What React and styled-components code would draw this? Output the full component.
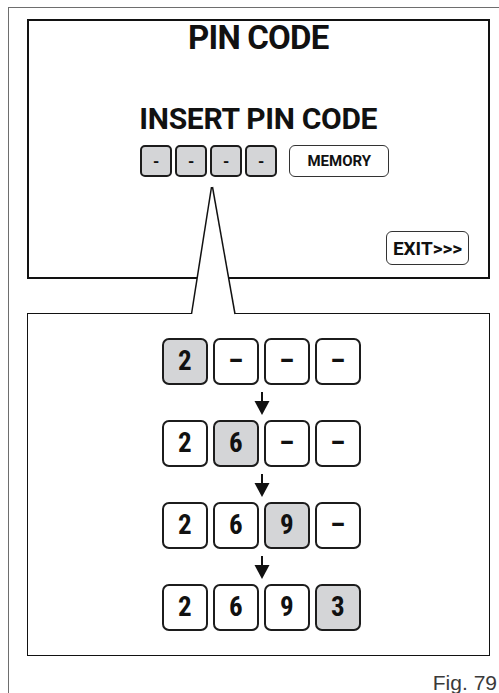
import React from 'react';
import styled, { createGlobalStyle } from 'styled-components';

const GlobalStyle = createGlobalStyle`
    html, body {
        margin: 0;
        padding: 0;
        background: #ffffff;
    }
    body {
        font-family: Roboto, "Liberation Sans", sans-serif;
        color: #111111;
    }
    * {
        box-sizing: border-box;
    }
`;

const Page = styled.div`
    position: relative;
    width: 499px;
    height: 693px;
    padding: 7px 0 0 8px;
    overflow: hidden;
`;

const Frame = styled.div`
    height: 100%;
    border-top: 1.5px solid #6e6e6e;
    border-left: 1.5px solid #6e6e6e;
    padding: 10.5px 9px 0 17.5px;
    display: flex;
    flex-direction: column;
`;

const Screen = styled.section`
    height: 261px;
    border: 2px solid #121212;
    display: flex;
    flex-direction: column;
    align-items: center;
`;

const Title = styled.h1`
    margin: 0.5px 0 0;
    font-size: 33px;
    line-height: 34px;
    font-weight: 700;
    font-stretch: 90%;
    letter-spacing: -0.8px;
`;

const Subtitle = styled.h2`
    margin: 49px 0 0;
    font-size: 30px;
    line-height: 30px;
    font-weight: 700;
    font-stretch: 90%;
    letter-spacing: -0.3px;
`;

const PinRow = styled.div`
    display: flex;
    align-items: center;
    gap: 3px;
    margin: 11px 0 0 13px;
`;

const SmallCell = styled.div`
    width: 32px;
    height: 32px;
    border: 2px solid #1c1c1c;
    border-radius: 5px;
    background: #d4d5d7;
    display: flex;
    align-items: center;
    justify-content: center;
    font-size: 16px;
    font-weight: 700;
`;

const MemoryButton = styled.div`
    width: 100px;
    height: 32px;
    margin-left: 9px;
    border: 1.5px solid #333333;
    border-radius: 6px;
    display: flex;
    align-items: center;
    justify-content: center;
    font-size: 15px;
    font-weight: 700;
    font-stretch: 88%;
`;

const ExitButton = styled.div`
    margin: auto 19px 12px 0;
    align-self: flex-end;
    width: 83px;
    height: 34px;
    border: 1.5px solid #333333;
    border-radius: 6px;
    display: flex;
    align-items: center;
    justify-content: center;
    font-size: 19px;
    font-weight: 700;
    font-stretch: 88%;
`;

const Detail = styled.section`
    height: 343px;
    margin-top: 34px;
    border: 1.5px solid #121212;
    padding-top: 23.5px;
    display: flex;
    flex-direction: column;
    align-items: center;
`;

const CodeRow = styled.div`
    display: flex;
    gap: 5px;
    margin-left: 6px;
`;

const Cell = styled.div`
    width: 46px;
    height: 47px;
    border: 2px solid #1c1c1c;
    border-radius: 7px;
    background: ${p => (p.$active ? '#d4d5d7' : '#ffffff')};
    display: flex;
    align-items: center;
    justify-content: center;
    font-size: 27px;
    font-weight: 700;
    font-stretch: 80%;
`;

const StepArrow = styled.svg`
    display: block;
    width: 16px;
    height: 23px;
    margin: 7px 0 5px 7px;
`;

const FigLabel = styled.div`
    align-self: flex-end;
    margin: 17px -7px 0 0;
    font-family: "Liberation Sans", Arial, sans-serif;
    font-size: 21px;
    line-height: 20px;
    color: #3a3a3a;
`;

const Callout = styled.svg`
    position: absolute;
    left: 189px;
    top: 185px;
    width: 50px;
    height: 133px;
    pointer-events: none;
`;

const steps = [
    ['2', '–', '–', '–'],
    ['2', '6', '–', '–'],
    ['2', '6', '9', '–'],
    ['2', '6', '9', '3'],
];

const Arrow = () => (
    <StepArrow viewBox="0 0 16 23">
        <rect x="7" y="0" width="2" height="11" fill="#111" />
        <polygon points="0.5,9 15.5,9 8,23" fill="#111" />
    </StepArrow>
);

const App = () => {
    return (
        <>
            <GlobalStyle />
            <Page>
                <Frame>
                    <Screen>
                        <Title>PIN CODE</Title>
                        <Subtitle>INSERT PIN CODE</Subtitle>
                        <PinRow>
                            {[0, 1, 2, 3].map(i => (
                                <SmallCell key={i}>-</SmallCell>
                            ))}
                            <MemoryButton>MEMORY</MemoryButton>
                        </PinRow>
                        <ExitButton>EXIT&gt;&gt;&gt;</ExitButton>
                    </Screen>

                    <Detail>
                        {steps.map((row, r) => (
                            <React.Fragment key={r}>
                                {r > 0 && <Arrow />}
                                <CodeRow>
                                    {row.map((digit, i) => (
                                        <Cell key={i} $active={i === r}>{digit}</Cell>
                                    ))}
                                </CodeRow>
                            </React.Fragment>
                        ))}
                    </Detail>

                    <FigLabel>Fig. 79</FigLabel>
                </Frame>

                {/* wedge from the third pin cell down to the enlarged view */}
                <Callout viewBox="0 0 50 133">
                    <polygon points="22.5,2 23.5,2 46.5,131.5 2,131.5" fill="#ffffff" />
                    <line x1="22.5" y1="2" x2="2.5" y2="129" stroke="#111" strokeWidth="1.5" />
                    <line x1="23.5" y1="2" x2="46" y2="129" stroke="#111" strokeWidth="1.5" />
                </Callout>
            </Page>
        </>
    );
};

export default App;
